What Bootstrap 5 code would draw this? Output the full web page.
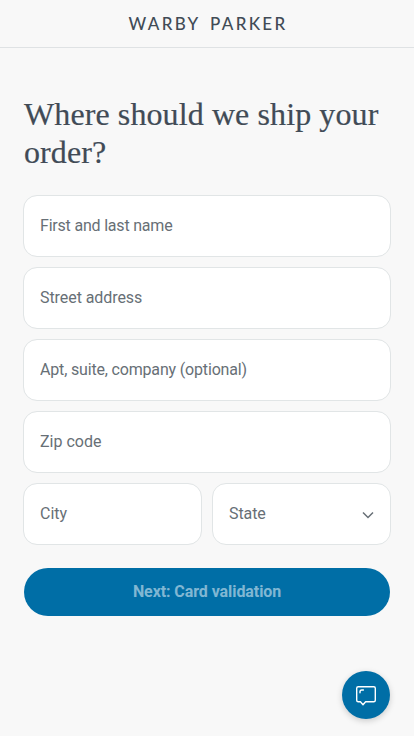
<!DOCTYPE html>
<html lang="en">
<head>
<meta charset="utf-8">
<meta name="viewport" content="width=device-width, initial-scale=1">
<title>Shipping address</title>
<link href="https://cdn.jsdelivr.net/npm/bootstrap@5.3.0/dist/css/bootstrap.min.css" rel="stylesheet">
<style>
body { background: #f8f8f8; color: #414b56; font-family: Roboto, "Liberation Sans", sans-serif; min-height: 100vh; }
.site-header { height: 48px; border-bottom: 1px solid #dfe2e4; }
.brand-name { font: 500 17px/1 Lato, sans-serif; letter-spacing: 2.3px; word-spacing: 3.5px; color: #414b56; padding: 0 0 1px 2px; }
.page-title { font: 400 32px/38px "Liberation Serif", serif; letter-spacing: .1px; color: #414b56; margin: 47px 0 24px 1px; -webkit-text-stroke: .2px #414b56; }
.ship-field.form-control, .ship-field.form-select { height: 62px; border: 1px solid #e1e5e6; border-radius: 14px; padding: 0 16px; font-size: 16px; letter-spacing: -.2px; color: #676f76; background-color: #fff; }
.ship-field.form-control { padding-bottom: 2px; }
.ship-field.field-street { letter-spacing: -.07px; }
.ship-field.field-apt { letter-spacing: -.17px; }
.ship-field.field-zip, .ship-field.field-city { letter-spacing: 0; }
.ship-field.form-select { letter-spacing: -.1px; background-image: none; }
.ship-field::placeholder { color: #676f76; opacity: 1; }
.form-wrap { padding: 0 23px; }
.fields { gap: 10px; }
.half { flex: 1 1 0; min-width: 0; }
.next-btn.btn { height: 48px; margin: 23px 1px 0; background: #006ea6; color: #80b7d3; font-weight: 700; font-size: 16px; letter-spacing: -.08px; border: 0; opacity: 1; }
.chat-btn.btn { width: 48px; height: 48px; right: 24px; bottom: 17px; background: #006ea6; border: 0; box-shadow: 0 2px 6px rgba(0,0,0,.18); }
.chevron { right: 15.5px; top: 24px; pointer-events: none; }
</style>
<script src="https://cdn.jsdelivr.net/npm/bootstrap@5.3.0/dist/js/bootstrap.bundle.min.js"></script>
</head>
<body>
<header class="site-header d-flex align-items-center justify-content-center">
  <a class="brand-name text-decoration-none" href="#">WARBY PARKER</a>
</header>
<main class="form-wrap">
  <h1 class="page-title text-nowrap">Where should we ship your<br>order?</h1>
  <form>
    <div class="fields d-grid">
      <input class="ship-field form-control" placeholder="First and last name">
      <input class="ship-field field-street form-control" placeholder="Street address">
      <input class="ship-field field-apt form-control" placeholder="Apt, suite, company (optional)">
      <input class="ship-field field-zip form-control" placeholder="Zip code">
      <div class="fields d-flex">
        <div class="half"><input class="ship-field field-city form-control" placeholder="City"></div>
        <div class="half position-relative">
          <select class="ship-field form-select" aria-label="State"><option>State</option></select>
          <svg class="chevron position-absolute" width="16" height="16" viewBox="0 0 16 16" fill="none" stroke="#676f76" stroke-width="1.5"><path d="M3 5.5 8 10.5 13 5.5"/></svg>
        </div>
      </div>
    </div>
    <div class="d-grid"><button type="button" class="next-btn btn rounded-pill" disabled>Next: Card validation</button></div>
  </form>
</main>
<button type="button" class="chat-btn btn rounded-circle position-fixed p-0 d-flex align-items-center justify-content-center" aria-label="Chat">
  <svg width="24" height="24" viewBox="0 0 24 24" fill="none" stroke="#fff" stroke-width="1.4" stroke-linejoin="round" stroke-linecap="round"><path d="M4.2 3.7H19.8Q21.3 3.7 21.3 5.2V17.3Q21.3 18.8 19.8 18.8H11.6L9 21.7 6.4 18.8H4.2Q2.7 18.8 2.7 17.3V5.2Q2.7 3.7 4.2 3.7ZM6 9.8V8.8Q6 7 7.8 7H9.4"/></svg>
</button>
</body>
</html>
